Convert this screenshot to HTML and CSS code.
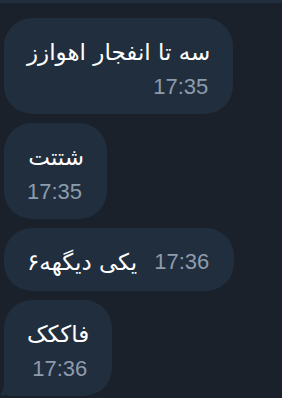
FILE: index.html
```html
<!DOCTYPE html>
<html lang="fa">
  <head>
    <meta charset="UTF-8" />
    <meta name="viewport" content="width=device-width, initial-scale=1.0" />
    <title>Chat</title>
    <link rel="stylesheet" href="styles.css">
  </head>
  <body>
    <div class="chat">
      <div class="prev-edge"></div>

      <div class="msg">
        <div class="msg-text">سه تا انفجار اهوازز</div>
        <div class="msg-time">17:35</div>
      </div>

      <div class="msg">
        <div class="msg-text">شتتت</div>
        <div class="msg-time">17:35</div>
      </div>

      <div class="msg msg-inline">
        <div class="msg-text">یکی دیگهه۶</div>
        <div class="msg-time">17:36</div>
      </div>

      <div class="msg msg-tail">
        <div class="msg-text">فاککک</div>
        <div class="msg-time">17:36</div>
        <svg class="tail" width="20" height="18" viewBox="0 0 20 18">
          <path d="M4 0 L20 0 L20 18 L16 18 C13 18 11 17 9.5 15.8 C7 17.4 3.5 17.8 0 17.4 C2.5 14.5 4 11 4 4 Z" fill="#212e3e" />
        </svg>
      </div>
    </div>
  </body>
</html>
```

FILE: styles.css
```css
/* Page */
body {
  margin: 0;
  background-color: #1a212b;
  font-family: "DejaVu Sans", "Noto Sans", sans-serif;
  overflow: hidden;
}

.chat {
  display: flex;
  flex-direction: column;
  align-items: flex-start;
  gap: 9px;
  padding: 0 0 0 4px;
}

/* bottom of the message above, cut off by the screen edge */
.prev-edge {
  align-self: stretch;
  height: 3px;
  margin: 0 0 6px -4px;
  background-color: #212e3e;
}

/* Message bubble */
.msg {
  position: relative;
  padding: 16px 23px 10px;
  background-color: #212e3e;
  border-radius: 28px;
}

.msg-text {
  direction: rtl;
  text-align: right;
  color: #ffffff;
  font-size: 23px;
  line-height: 36px;
}

.msg-time {
  padding-right: 2px;
  text-align: right;
  color: #8d9cad;
  font-family: "Liberation Sans", Arial, sans-serif;
  font-size: 22px;
  line-height: 34px;
}

/* short message: time sits beside the text */
.msg-inline {
  display: flex;
  align-items: center;
  gap: 17px;
  padding-bottom: 11px;
}

.msg-inline .msg-time {
  line-height: 36px;
}

.msg-tail {
  border-bottom-left-radius: 6px;
}

.tail {
  position: absolute;
  left: -4px;
  bottom: 0;
}
```
